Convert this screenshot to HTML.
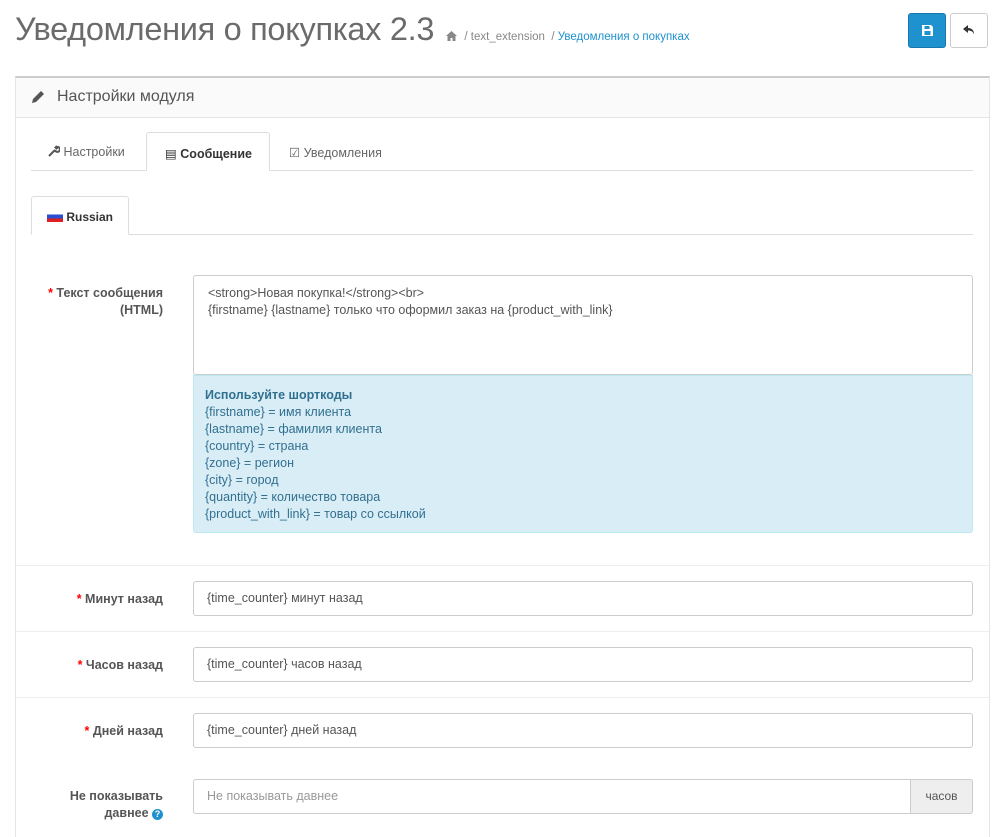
<!DOCTYPE html>
<html><head><meta charset="utf-8"><style>
*{box-sizing:border-box}
html,body{margin:0;background:#fff;font-family:"Liberation Sans","DejaVu Sans",sans-serif;font-size:12px;color:#666;width:1004px;height:837px;overflow:hidden;position:relative}
.abs{position:absolute}
h1{position:absolute;left:15px;top:11px;margin:0;font-weight:normal;font-size:32.5px;color:#6b6b6b;letter-spacing:-0.3px}
.bc{position:absolute;left:445px;top:30px;font-size:11.5px;color:#888}
.bc a{color:#1e91cf}
.btn{position:absolute;top:13px;width:38px;height:35px;border-radius:3px}
.panel{position:absolute;left:15px;top:76px;width:975px;height:800px;border:1px solid #e5e5e5;border-top:2px solid #ccc}
.ph{height:40px;background:#fafafa;border-bottom:1px solid #e5e5e5;font-size:16px;color:#555;padding:10px 0 0 41px}
.tabs{position:absolute;left:31px;top:170px;width:942px;border-top:1px solid #ddd}
.tab{position:absolute;top:132px;height:39px;font-size:12.5px;padding-top:13px;color:#666}
.tab.act{border:1px solid #ddd;border-bottom:1px solid #fff;background:#fff;color:#333;font-weight:bold;border-radius:3px 3px 0 0}
.lbl{position:absolute;right:841px;text-align:right;font-weight:bold;color:#555;font-size:12.5px;line-height:17px}
.req{color:#f00}
.inp{position:absolute;left:193px;width:780px;height:35px;border:1px solid #ccc;border-radius:3px;padding:9px 13px;font-size:12.5px;color:#555}
.sep{position:absolute;left:16px;width:973px;border-top:1px solid #eee}
</style></head><body>
<h1>Уведомления о покупках 2.3</h1>
<div class="bc"><svg width="13" height="11" viewBox="0 0 13 11" style="vertical-align:-1px"><path d="M6.5 1L1 6h1.5v5h3V8h2v3h3V6H12z" fill="#888"/></svg> &nbsp;/ text_extension &nbsp;/ <a>Уведомления о покупках</a></div>
<div class="btn" style="left:908px;background:#1e91cf;border:1px solid #1978ab"><svg class="abs" style="left:13px;top:11px" width="11" height="11" viewBox="0 0 11 11"><path d="M0 0h9l2 2v9H0z" fill="#fff"/><rect x="2.5" y="1" width="5" height="3" fill="#1e91cf"/><rect x="2.5" y="6" width="6" height="4" fill="#1e91cf"/></svg></div>
<div class="btn" style="left:950px;border:1px solid #ccc;background:#fff"><svg class="abs" style="left:12px;top:11px" width="13" height="12" viewBox="0 0 13 12"><path d="M5 0L0 4l5 4V5.5c3 0 5 1 6 4 0-4-2-6.5-6-6.5z" fill="#333"/></svg></div>
<div class="panel"><div class="ph"><svg class="abs" style="left:15px;top:12px" width="14" height="14" viewBox="0 0 14 14"><path d="M10 1l3 3-8 8-4 1 1-4z" fill="#555"/></svg>Настройки модуля</div></div>
<div class="tabs"></div>
<div class="tab" style="left:48px"><svg width="12" height="12" viewBox="0 0 12 12" style="vertical-align:-1px"><path d="M1 11l6-6M7 5a2.5 2.5 0 1 0 3-3l-1.5 1.5-1-1L9 1" stroke="#555" stroke-width="2" fill="none"/></svg> Настройки</div>
<div class="tab act" style="left:146px;width:124px;padding-left:18px">▤ Сообщение</div>
<div class="tab" style="left:289px">☑ Уведомления</div>
<div class="abs" style="left:31px;top:234px;width:942px;border-top:1px solid #ddd"></div>
<div class="tab act" style="left:31px;top:196px;height:39px;width:98px;padding-left:15px;font-size:12px"><span style="display:inline-block;width:16px;height:11px;vertical-align:-1px;background:linear-gradient(#fff 33%,#2a4ed0 33% 66%,#e02020 66%)"></span> Russian</div>
<div class="lbl" style="top:285px"><span class="req">*</span> Текст сообщения<br>(HTML)</div>
<div class="abs" style="left:193px;top:275px;width:780px;height:100px;border:1px solid #ccc;border-radius:3px;padding:9px 14px;font-size:12.5px;line-height:17px;color:#555">&lt;strong&gt;Новая покупка!&lt;/strong&gt;&lt;br&gt;<br>{firstname} {lastname} только что оформил заказ на {product_with_link}</div>
<div class="abs" style="left:193px;top:375px;width:780px;height:158px;background:#d9edf7;border:1px solid #bce8f1;border-radius:0 0 3px 3px;padding:11px 11px;font-size:12.5px;line-height:17px;color:#31708f"><b>Используйте шорткоды</b><br>{firstname} = имя клиента<br>{lastname} = фамилия клиента<br>{country} = страна<br>{zone} = регион<br>{city} = город<br>{quantity} = количество товара<br>{product_with_link} = товар со ссылкой</div>
<div class="sep" style="top:565px"></div>
<div class="lbl" style="top:591px"><span class="req">*</span> Минут назад</div>
<div class="inp" style="top:581px">{time_counter} минут назад</div>
<div class="sep" style="top:631px"></div>
<div class="lbl" style="top:657px"><span class="req">*</span> Часов назад</div>
<div class="inp" style="top:647px">{time_counter} часов назад</div>
<div class="sep" style="top:697px"></div>
<div class="lbl" style="top:723px"><span class="req">*</span> Дней назад</div>
<div class="inp" style="top:713px">{time_counter} дней назад</div>
<div class="lbl" style="top:788px">Не показывать<br>давнее <span style="display:inline-block;width:11px;height:11px;border-radius:50%;background:#1e91cf;color:#fff;font-size:9px;line-height:11px;text-align:center">?</span></div>
<div class="inp" style="top:779px;color:#999">Не показывать давнее</div>
<div class="abs" style="left:910px;top:779px;width:63px;height:35px;background:#eee;border:1px solid #ccc;border-radius:0 3px 3px 0;text-align:center;padding-top:9px;color:#555">часов</div>
</body></html>
